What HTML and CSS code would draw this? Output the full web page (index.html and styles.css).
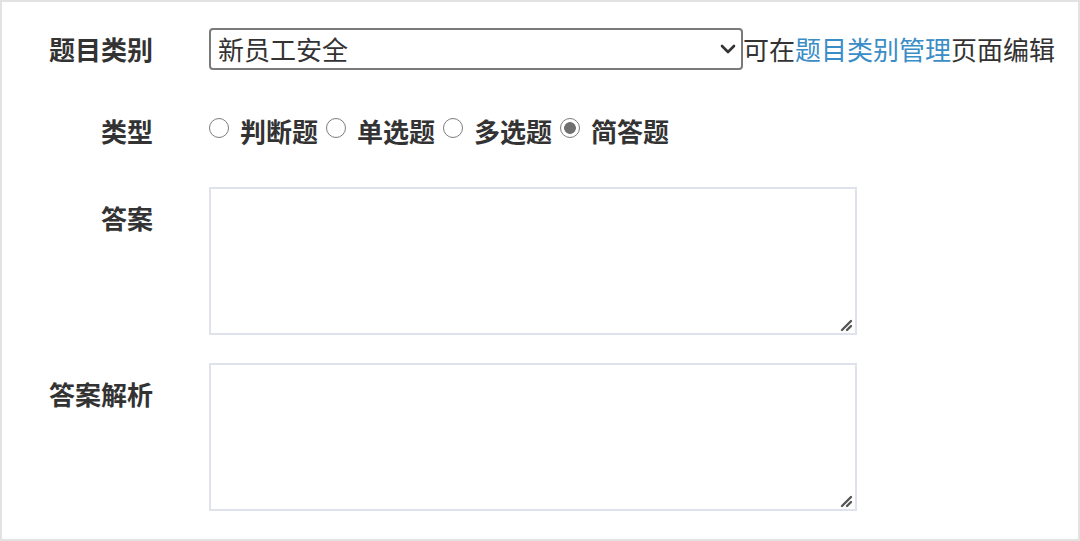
FILE: index.html
```html
<!DOCTYPE html>
<html lang="zh-CN">
<head>
<meta charset="utf-8">
<title>题目编辑</title>
<link rel="stylesheet" href="styles.css">
</head>
<body>
<div class="frame">
  <form class="form">
    <div class="row row-category">
      <label class="label">题目类别</label>
      <div class="field field-inline">
        <div class="select-wrap">
          <select class="select">
            <option>新员工安全</option>
          </select>
          <svg class="chevron" width="16" height="10" viewBox="0 0 16 10"><path d="M2 2 L8 8 L14 2" fill="none" stroke="#333" stroke-width="2.6" stroke-linecap="round" stroke-linejoin="round"/></svg>
        </div>
        <span class="hint">可在<a class="link" href="#">题目类别管理</a>页面编辑</span>
      </div>
    </div>
    <div class="row row-type">
      <label class="label">类型</label>
      <div class="field radios">
        <label class="radio-item"><input type="radio" name="t" class="radio"><span>判断题</span></label>
        <label class="radio-item"><input type="radio" name="t" class="radio"><span>单选题</span></label>
        <label class="radio-item"><input type="radio" name="t" class="radio"><span>多选题</span></label>
        <label class="radio-item"><input type="radio" name="t" class="radio" checked><span>简答题</span></label>
      </div>
    </div>
    <div class="row row-answer">
      <label class="label label-top">答案</label>
      <div class="field area-wrap">
        <textarea class="textarea"></textarea>
        <svg class="grip" width="14" height="14" viewBox="0 0 14 14"><path d="M2 12 L11 3 M7 12 L11 8" stroke="#555" stroke-width="2.4" stroke-linecap="round"/></svg>
      </div>
    </div>
    <div class="row row-analysis">
      <label class="label label-top">答案解析</label>
      <div class="field area-wrap">
        <textarea class="textarea"></textarea>
        <svg class="grip" width="14" height="14" viewBox="0 0 14 14"><path d="M2 12 L11 3 M7 12 L11 8" stroke="#555" stroke-width="2.4" stroke-linecap="round"/></svg>
      </div>
    </div>
  </form>
</div>
</body>
</html>
```

FILE: styles.css
```css
* { box-sizing: border-box; }
html, body { margin: 0; padding: 0; background: #fff; }
body {
  font-family: "Noto Sans CJK SC", "Noto Sans", "Liberation Sans", sans-serif;
  color: #333;
}
.frame {
  width: 1080px;
  height: 541px;
  border: 2px solid #e2e2e2;
  padding-top: 26px;
  overflow: hidden;
}
.form { display: flex; flex-direction: column; }
.row {
  display: flex;
  align-items: center;
}
.label {
  width: 151px;
  flex: none;
  text-align: right;
  font-size: 26px;
  font-weight: 700;
  line-height: 34px;
  color: #333;
}
.field { margin-left: 56px; }
.field-inline { display: flex; align-items: center; }
.select-wrap { position: relative; width: 534px; height: 42px; flex: none; }
.select {
  appearance: none;
  -webkit-appearance: none;
  width: 100%;
  height: 100%;
  border: 2px solid #7a7a7a;
  border-radius: 4px;
  background: #fff;
  font-family: inherit;
  font-size: 26px;
  color: #333;
  padding: 0 0 0 7px;
  line-height: 38px;
  margin: 0;
}
.chevron { position: absolute; right: 7px; top: 16px; pointer-events: none; }
.hint { font-size: 26px; line-height: 34px; color: #333; white-space: nowrap; }
.link { color: #3b8dc6; text-decoration: none; }

.row-type { margin-top: 41px; height: 40px; }
.radios { display: flex; align-items: center; gap: 8px; }
.radio-item { display: flex; align-items: center; font-size: 26px; font-weight: 700; line-height: 34px; }
.radio {
  appearance: none;
  -webkit-appearance: none;
  flex: none;
  width: 20px;
  height: 20px;
  margin: 0 11px 0 0;
  border: 1.6px solid #7c7c7c;
  border-radius: 50%;
  background: #fff;
  position: relative;
  top: -3px;
}
.radio:checked {
  background: radial-gradient(circle, #6f6f6f 0 5.5px, #fff 6.2px);
}

.row-answer { margin-top: 36px; align-items: flex-start; }
.row-analysis { margin-top: 28px; align-items: flex-start; }
.label-top { padding-top: 14px; }
.area-wrap { position: relative; }
.textarea {
  display: block;
  width: 648px;
  height: 148px;
  border: 2px solid #dfe2ea;
  border-radius: 0;
  margin: 0;
  font-family: inherit;
  font-size: 24px;
  padding: 4px 6px;
  resize: none;
}
.grip { position: absolute; right: 3px; bottom: 3px; pointer-events: none; }
```
